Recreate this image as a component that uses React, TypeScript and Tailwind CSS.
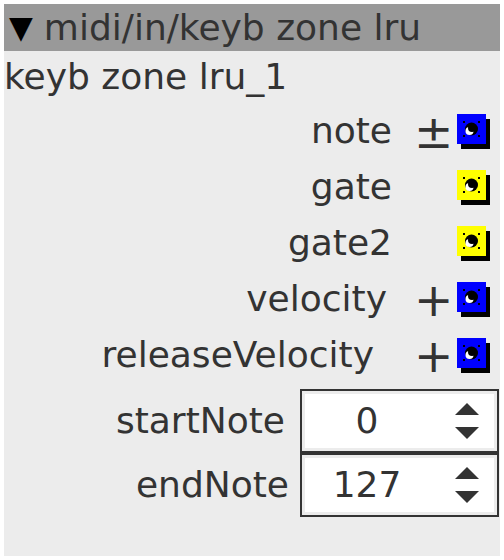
import React from 'react';

type Port = {
  name: string;
  sign?: string;
  color: 'blue' | 'yellow';
  pr: number;
};

const PORTS: Port[] = [
  { name: 'note', sign: '±', color: 'blue', pr: 0 },
  { name: 'gate', color: 'yellow', pr: 0 },
  { name: 'gate2', color: 'yellow', pr: 0 },
  { name: 'velocity', sign: '+', color: 'blue', pr: 5 },
  { name: 'releaseVelocity', sign: '+', color: 'blue', pr: 18 },
];

function Jack({ color }: { color: 'blue' | 'yellow' }) {
  const fill = color === 'blue' ? '#0000ff' : '#ffff00';
  return (
    <svg width="34" height="35" viewBox="0 0 34 35" className="shrink-0">
      <rect x="4" y="5" width="29" height="30" fill="#000" />
      <rect x="0" y="0" width="29" height="30" fill={fill} />
      <rect x="6" y="7" width="2" height="2" fill="#000" />
      <rect x="21" y="7" width="2" height="2" fill="#000" />
      <rect x="6" y="21" width="2" height="2" fill="#000" />
      <rect x="21" y="21" width="2" height="2" fill="#000" />
      <circle cx="14.5" cy="15" r="6.5" fill="#000" />
      <circle cx="12.5" cy="17" r="4" fill="#fff" />
      <circle cx="15" cy="14" r="4" fill="#000" />
    </svg>
  );
}

function SpinBox({ value }: { value: number }) {
  return (
    <div className="w-[199px] h-[64px] border-2 border-[#333] mr-[1px] shrink-0">
      <div className="h-full border-[3px] border-[#ececec] bg-white flex items-center">
        <div className="w-[124px] text-center">{value}</div>
        <div className="flex-1 flex flex-col items-center gap-[12px] pl-[10px]">
          <svg width="24" height="12" viewBox="0 0 24 12">
            <path d="M12 0 L24 12 L0 12 Z" fill="#333" />
          </svg>
          <svg width="24" height="12" viewBox="0 0 24 12">
            <path d="M0 0 L24 0 L12 12 Z" fill="#333" />
          </svg>
        </div>
      </div>
    </div>
  );
}

export default function App() {
  return (
    <div className="w-[504px] h-[560px] bg-white p-1" style={{ fontFamily: '"DejaVu Sans", sans-serif' }}>
      <div className="w-[496px] h-[552px] bg-[#ececec] text-[#333] text-[36px] leading-none">
        {/* Header */}
        <div className="h-[47px] bg-[#999] flex items-center pl-[5px]">
          <span className="text-black text-[31px] mr-[11px]">▼</span>
          <span>midi/in/keyb zone lru</span>
        </div>

        {/* Instance name */}
        <div className="h-[52px] flex items-center">keyb zone lru_1</div>

        {/* Ports */}
        {PORTS.map((p) => (
          <div key={p.name} className="h-[56px] flex items-center">
            <div className="flex-1 text-right" style={{ paddingRight: p.pr }}>
              {p.name}
            </div>
            <div className="w-[65px] pl-[22px] text-[47px] leading-none">{p.sign}</div>
            <div className="mr-[9px] pt-[1px]">
              <Jack color={p.color} />
            </div>
          </div>
        ))}

        {/* Params */}
        <div className="mt-[6px] flex flex-col">
          <div className="flex items-center">
            <div className="flex-1 text-right pr-[15px]">startNote</div>
            <SpinBox value={0} />
          </div>
          <div className="flex items-center">
            <div className="flex-1 text-right pr-[11px]">endNote</div>
            <SpinBox value={127} />
          </div>
        </div>
      </div>
    </div>
  );
}
